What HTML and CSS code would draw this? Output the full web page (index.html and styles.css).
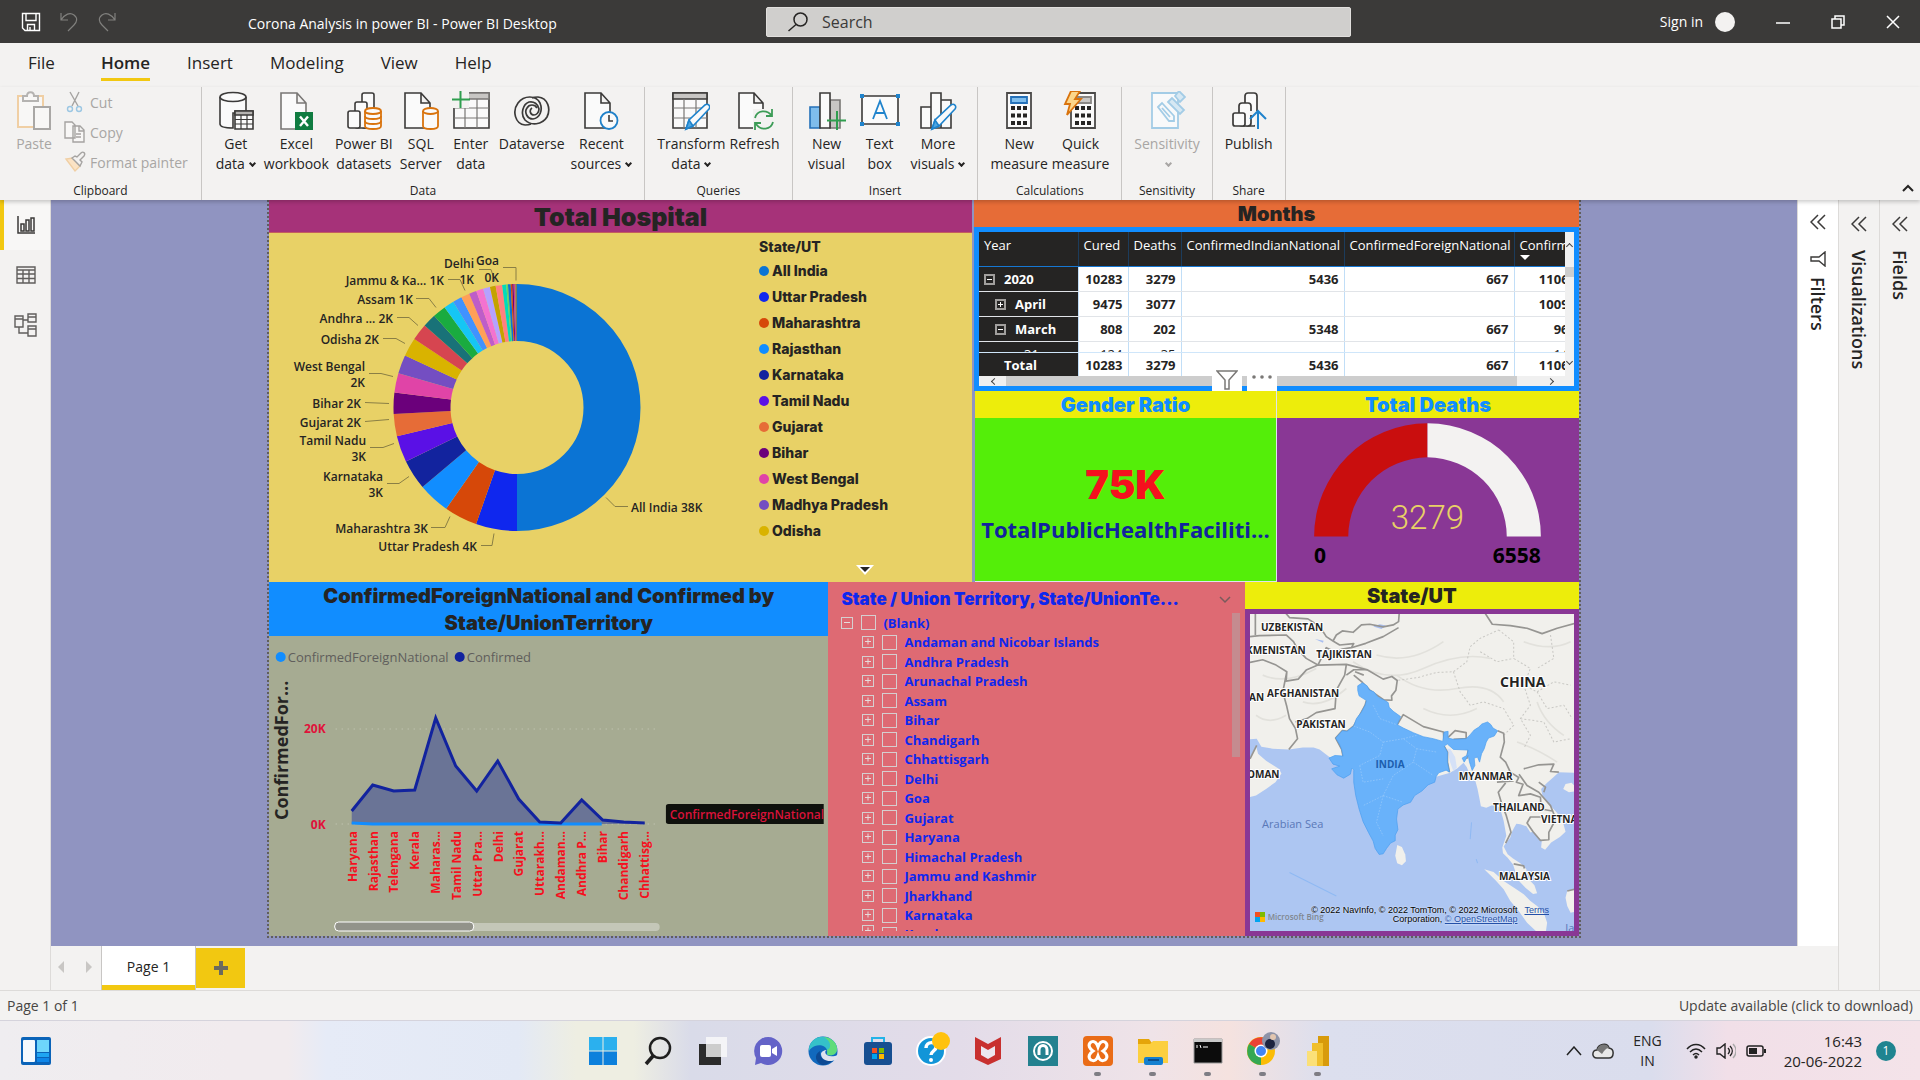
FILE: index.html
```html
<!DOCTYPE html>
<html lang="en">
<head>
<meta charset="utf-8">
<title>Corona Analysis in power BI - Power BI Desktop</title>
<link rel="stylesheet" href="styles.css">
</head>
<body>
<div class="app">

<header class="titlebar">
  <div class="titlebar-left">
    <button class="icon-btn" aria-label="Save"><svg width="20" height="20" viewBox="0 0 20 20" fill="none" stroke="#fff" stroke-width="1.4"><path d="M1.5 1.5h17v17H4l-2.500-2.500zM5 1.500v7h10v-7M6.500 18v-5.500h7V18M9 18v-3"/></svg></button>
    <button class="icon-btn" aria-label="Undo"><svg width="20" height="20" viewBox="0 0 20 20" fill="none" stroke="#81807e" stroke-width="1.200"><path d="M2 1v7h7M2 8C6 2 11 0 15 3s3 7 0 10l-6 6"/></svg></button>
    <button class="icon-btn" aria-label="Redo"><svg width="20" height="20" viewBox="0 0 20 20" fill="none" stroke="#81807e" stroke-width="1.200"><path d="M18 1v7h-7M18 8C14 2 9 0 5 3s-3 7 0 10l6 6"/></svg></button>
    <span class="doc-title">Corona Analysis in power BI - Power BI Desktop</span>
  </div>
  <label class="search">
    <svg width="22" height="20" viewBox="0 0 22 20" fill="none" stroke="#252423" stroke-width="1.500"><circle cx="13.500" cy="7.500" r="6.500"/><path d="M9 12.500L1.500 19"/></svg>
    <input type="text" placeholder="Search" aria-label="Search">
  </label>
  <div class="titlebar-right">
    <button class="sign-in">Sign in<span class="avatar"></span></button>
    <button class="icon-btn" aria-label="Minimize"><svg width="14" height="14" viewBox="0 0 14 14" stroke="#fff" stroke-width="1.500"><path d="M0 8h14"/></svg></button>
    <button class="icon-btn" aria-label="Restore"><svg width="14" height="14" viewBox="0 0 14 14" fill="none" stroke="#fff" stroke-width="1.500"><path d="M1 4h9v9H1zM4 4V1h9v9h-3"/></svg></button>
    <button class="icon-btn" aria-label="Close"><svg width="14" height="14" viewBox="0 0 14 14" stroke="#fff" stroke-width="1.500"><path d="M1 1l12 12M13 1L1 13"/></svg></button>
  </div>
</header>

<nav class="tabs">
  <button class="tab file">File</button>
  <button class="tab active">Home</button>
  <button class="tab">Insert</button>
  <button class="tab">Modeling</button>
  <button class="tab">View</button>
  <button class="tab">Help</button>
</nav>

<section class="ribbon">
  <div class="group group-clipboard">
    <div class="group-body">
      <button class="tool off">
        <svg width="38" height="40" viewBox="0 0 38 40" fill="#f8f7f6" stroke-width="2"><path d="M3 5h25v31H3z" stroke="#f0cfa4"/><path d="M6 8h19v25H6z" stroke="none"/><path d="M8 10V5h4c0-5 7-5 7 0h4v5z" stroke="#b5b3b1"/><path d="M19 16h16v22H19z" stroke="#a9a7a5"/></svg>
        <span>Paste</span></button>
      <div class="mini-tools">
        <button class="mini"><svg width="22" height="22" viewBox="0 0 22 22" fill="none" stroke="#a5a3a1" stroke-width="1.400"><path d="M6 1l8 14M15 1L8 15"/><circle cx="6" cy="18" r="2.500" stroke="#9cc7e3"/><circle cx="15" cy="18" r="2.500" stroke="#9cc7e3"/></svg>Cut</button>
        <button class="mini"><svg width="22" height="22" viewBox="0 0 22 22" fill="#f8f7f6" stroke="#a5a3a1" stroke-width="1.400"><path d="M1 1h7l3 3v13H1zM9 5h7l4 4v12H9zM15 5v5h5M12 13h5M12 16h5"/></svg>Copy</button>
        <button class="mini"><svg width="22" height="22" viewBox="0 0 22 22" fill="#f3f2f1" stroke="#a5a3a1" stroke-width="1.400"><path d="M2 8l9 12 5-5-7-8z" fill="#fbe3c5" stroke="#f0cfa4"/><path d="M8 7l8 8 2-4-2-2 4-4c2-3-1-5-3-3l-4 4-2-1z"/></svg>Format painter</button>
      </div>
    </div>
    <div class="group-name">Clipboard</div>
  </div>

  <div class="group group-data">
    <div class="group-body">
      <button class="tool"><svg width="38" height="40" viewBox="0 0 38 40" fill="#fafafa" stroke="#3b3a39" stroke-width="1.600"><path d="M3 6v27c0 3 5 4 13 4V22h13V6"/><ellipse cx="16" cy="6" rx="13" ry="4.500"/><path d="M18 20h18v18H18z"/><path d="M18 20h18v4H18z" fill="#b5b3b1"/><path d="M18 28.500h18M18 33h18M24 24v14M30 24v14" stroke-width="1.200"/></svg><span>Get<br>data<i class="caret"></i></span></button>
      <button class="tool"><svg width="38" height="40" viewBox="0 0 38 40" fill="#fafafa" stroke="#797775" stroke-width="1.600"><path d="M4 2h16l9 10v26H4zM20 2v10h9"/><path d="M18 21h18v18H18z" fill="#107c41" stroke="none"/><path d="M23 25.500l8 9.500M31 25.500L23 35" stroke="#fff" stroke-width="2.400"/></svg><span>Excel<br>workbook</span></button>
      <button class="tool"><svg width="38" height="40" viewBox="0 0 38 40" fill="#fafafa" stroke="#3b3a39" stroke-width="1.600"><rect x="17" y="2" width="12" height="35" rx="2"/><rect x="10" y="11" width="12" height="26" rx="2"/><rect x="3" y="20" width="12" height="17" rx="2"/><g stroke="#d9730d" stroke-width="1.800"><path d="M20 20v15c0 4 16 4 16 0V20"/><ellipse cx="28" cy="20" rx="8" ry="3"/><path d="M20 25c0 4 16 4 16 0M20 30c0 4 16 4 16 0" fill="none"/></g></svg><span>Power BI<br>datasets</span></button>
      <button class="tool"><svg width="38" height="40" viewBox="0 0 38 40" fill="#fafafa" stroke="#3b3a39" stroke-width="1.600"><path d="M3 2h16l9 10v25H3zM19 2v10h9"/><g stroke="#d9730d" stroke-width="1.800"><path d="M21 20v15c0 4 15 4 15 0V20"/><ellipse cx="28.500" cy="20" rx="7.500" ry="3"/></g></svg><span>SQL<br>Server</span></button>
      <button class="tool"><svg width="38" height="40" viewBox="0 0 38 40" fill="#fafafa" stroke="#3b3a39" stroke-width="1.600"><path d="M2 2h35v35H2z"/><path d="M13 2h24v6H13z" fill="#c8c6c4" stroke="#797775"/><path d="M2 17h35M2 27h35M13 8v29M25 8v29" stroke="#797775" stroke-width="1.200"/><path d="M0 0h17v17H0z" fill="#f3f2f1" stroke="none"/><path d="M8.500-1v18M0 8.500h18" stroke="#2f9e4f" stroke-width="2"/></svg><span>Enter<br>data</span></button>
      <button class="tool"><svg width="38" height="40" viewBox="0 0 38 40" fill="none" stroke="#3b3a39" stroke-width="1.700"><path d="M12 34C2 33-1 20 5 12 11 4 23 4 27 12c3 7 0 15-7 16-6 0-9-7-6-11 2-4 8-4 10 0"/><path d="M25 6c10 1 13 12 9 20-5 8-16 9-22 3-5-6-2-16 4-18 5-1 9 2 10 7 0 4-3 6-5 6-4 0-5-5-2-7"/><path d="M19 7c2-1 4-1 6-1M12 34c3 0 4 0 6-1"/></svg><span>Dataverse</span></button>
      <button class="tool"><svg width="38" height="40" viewBox="0 0 38 40" fill="#fafafa" stroke="#3b3a39" stroke-width="1.600"><path d="M3 2h16l9 10v25H3zM19 2v10h9"/><circle cx="27" cy="29.500" r="8.500" stroke="#2081c9" stroke-width="1.800"/><path d="M27 24v6h4" fill="none"/></svg><span>Recent<br>sources<i class="caret"></i></span></button>
    </div>
    <div class="group-name">Data</div>
  </div>

  <div class="group">
    <div class="group-body">
      <button class="tool"><svg width="38" height="40" viewBox="0 0 38 40" fill="#fafafa" stroke="#3b3a39" stroke-width="1.600"><path d="M1 2h34v35H1z"/><path d="M1 2h34v6H1z" fill="#c8c6c4"/><path d="M1 17h34M1 27h34M12 8v29M24 8v29" stroke="#797775" stroke-width="1.200"/><path d="M14 38l3-9 16-15c3-2 6 1 4 4L21 35z" stroke="#1f83cc"/><path d="M14 38l3-9 4 6z" fill="#4fa7e2" stroke="#1f83cc"/></svg><span>Transform<br>data<i class="caret"></i></span></button>
      <button class="tool"><svg width="38" height="40" viewBox="0 0 38 40" fill="#fafafa" stroke="#3b3a39" stroke-width="1.600"><path d="M3 2h15l9 10v25H3zM18 2v10h9"/><path d="M17 18h21v22H17z" fill="#f3f2f1" stroke="none"/><path d="M19 27c2-8 12-9 17-2M36 18v7h-6M37 31c-2 8-12 9-17 2M19 39v-7h6" fill="none" stroke="#3d9c57" stroke-width="1.800"/></svg><span>Refresh</span></button>
    </div>
    <div class="group-name">Queries</div>
  </div>

  <div class="group group-insert">
    <div class="group-body">
      <button class="tool"><svg width="38" height="40" viewBox="0 0 38 40" fill="#fafafa" stroke="#3b3a39" stroke-width="1.600"><path d="M2 16h10v21H2z" fill="#7fbdec" stroke="#2470b8"/><path d="M22 9h10v28H22z" fill="#c8c6c4" stroke="#797775"/><path d="M12 2h10v35H12z"/><path d="M29 20v19M19 29.500h19" stroke="#2f9e4f" stroke-width="2"/></svg><span>New<br>visual</span></button>
      <button class="tool"><svg width="42" height="40" viewBox="0 0 42 40" fill="#fafafa" stroke="#3b3a39" stroke-width="1.600"><path d="M3 5h36v28H3z"/><g fill="#1f83cc" stroke="none"><path d="M1 3h4v4H1zM37 3h4v4h-4zM1 31h4v4H1zM37 31h4v4h-4z"/></g><path d="M14 28l7-18 7 18M16.500 22h9" fill="none" stroke="#1f83cc" stroke-width="1.800"/></svg><span>Text<br>box</span></button>
      <button class="tool"><svg width="38" height="40" viewBox="0 0 38 40" fill="#fafafa" stroke="#3b3a39" stroke-width="1.600"><path d="M2 16h10v21H2zM22 9h10v28H22zM12 2h10v35H12z"/><path d="M13 38l3-9 16-15c3-2 6 1 4 4L20 35z" stroke="#1f83cc"/><path d="M13 38l3-9 4 6z" fill="#4fa7e2" stroke="#1f83cc"/></svg><span>More<br>visuals<i class="caret"></i></span></button>
    </div>
    <div class="group-name">Insert</div>
  </div>

  <div class="group">
    <div class="group-body">
      <button class="tool"><svg width="28" height="40" viewBox="0 0 28 40" fill="#fafafa" stroke="#4a4948" stroke-width="1.800"><path d="M2 2h24v35H2z"/><path d="M6 6h16v6H6z" fill="#7fbdec" stroke="#2470b8"/><path d="M6 17h17M6 24.500h17M6 32h17" stroke="#252423" stroke-width="4" stroke-dasharray="4 2"/></svg><span>New<br>measure</span></button>
      <button class="tool"><svg width="36" height="40" viewBox="0 0 36 40" fill="#fafafa" stroke="#4a4948" stroke-width="1.800"><path d="M8 2h24v35H8z"/><path d="M14 6h14v6H14z" fill="#c8c6c4" stroke="#8a8886"/><path d="M12 17h17M12 24.500h17M12 32h17" stroke="#252423" stroke-width="4" stroke-dasharray="4 2"/><path d="M8 0h9l-5 8h6L4 24l3-11H2z" fill="#fcd68a" stroke="#d9730d"/></svg><span>Quick<br>measure</span></button>
    </div>
    <div class="group-name">Calculations</div>
  </div>

  <div class="group">
    <div class="group-body">
      <button class="tool off"><svg width="38" height="40" viewBox="0 0 38 40" fill="#f8f9fa" stroke="#a3cce6" stroke-width="1.800"><path d="M4 2h26v35H4z"/><path d="M10 16l4-4 12 13v5h-5zM14 17l8 9" /><path d="M20 11l4-4 12 12-4 4zM27 5l4-5 6 6-5 5z" fill="#d6e8f3"/></svg><span>Sensitivity<br><i class="caret"></i></span></button>
    </div>
    <div class="group-name">Sensitivity</div>
  </div>

  <div class="group">
    <div class="group-body">
      <button class="tool"><svg width="38" height="40" viewBox="0 0 38 40" fill="#fafafa" stroke="#3b3a39" stroke-width="1.700"><rect x="15" y="2" width="12" height="33" rx="3"/><rect x="9" y="12" width="12" height="23" rx="3"/><rect x="3" y="22" width="12" height="13" rx="2"/><path d="M20 20h16v20H25V24h-5z" fill="#f3f2f1" stroke="none"/><path d="M28 38V20M20 28l8-8 8 8" fill="none" stroke="#1f83cc" stroke-width="2"/></svg><span>Publish</span></button>
    </div>
    <div class="group-name">Share</div>
  </div>
  <button class="icon-btn collapse" aria-label="Collapse ribbon"><svg width="12" height="8" viewBox="0 0 12 8" fill="none" stroke="#252423" stroke-width="2"><path d="M1 7l5-5 5 5"/></svg></button>
</section>

<main class="workspace">
  <nav class="rail">
    <button class="rail-btn on" aria-label="Report view"><svg width="18" height="18" viewBox="0 0 18 18" fill="none" stroke="#3b3a39" stroke-width="1.500"><path d="M1 0v17h17M4 8h3v7H4zM9 4h3v11H9zM14 2h3v13h-3z"/></svg></button>
    <button class="rail-btn" aria-label="Data view"><svg width="20" height="18" viewBox="0 0 20 18" fill="none" stroke="#605e5c" stroke-width="1.400"><path d="M1 1h18v16H1zM1 4h18M1 8h18M1 12.500h18M7 4v13M13 4v13"/></svg></button>
    <button class="rail-btn" aria-label="Model view"><svg width="24" height="24" viewBox="0 0 24 24" fill="none" stroke="#605e5c" stroke-width="1.400"><path d="M1 3h8v11H1zM1 6h8M14 1h8v8h-8zM14 4h8M14 13h8v10h-8zM14 16h8M9 7h5M5 14v6h9"/></svg></button>
  </nav>

  <div class="center">
    <div class="center-row">
      <div class="canvas">
        <div class="report">
          <div class="report-top">
            <section class="visual hospital">
              <h2>Total Hospital</h2>
              <div class="hospital-body">
                <svg class="donut" viewBox="0 0 480 348" role="img" aria-label="Hospitals by state">
                  <g class="ring" transform="rotate(-90 248 174)">
                    <circle cx="248" cy="174" r="95" pathLength="360" stroke="#0b74d4" stroke-dasharray="180 360"/>
                    <circle cx="248" cy="174" r="95" pathLength="360" stroke="#0f27ee" stroke-dasharray="19.400 360" stroke-dashoffset="-180"/>
                    <circle cx="248" cy="174" r="95" pathLength="360" stroke="#d64809" stroke-dasharray="15.600 360" stroke-dashoffset="-199.400"/>
                    <circle cx="248" cy="174" r="95" pathLength="360" stroke="#118dff" stroke-dasharray="14.900 360" stroke-dashoffset="-215"/>
                    <circle cx="248" cy="174" r="95" pathLength="360" stroke="#12239e" stroke-dasharray="14.100 360" stroke-dashoffset="-229.900"/>
                    <circle cx="248" cy="174" r="95" pathLength="360" stroke="#5a10e6" stroke-dasharray="12.500 360" stroke-dashoffset="-244"/>
                    <circle cx="248" cy="174" r="95" pathLength="360" stroke="#e66c37" stroke-dasharray="10.400 360" stroke-dashoffset="-256.500"/>
                    <circle cx="248" cy="174" r="95" pathLength="360" stroke="#6b007b" stroke-dasharray="10.100 360" stroke-dashoffset="-266.900"/>
                    <circle cx="248" cy="174" r="95" pathLength="360" stroke="#e044a7" stroke-dasharray="9.200 360" stroke-dashoffset="-277"/>
                    <circle cx="248" cy="174" r="95" pathLength="360" stroke="#744ec2" stroke-dasharray="8.800 360" stroke-dashoffset="-286.200"/>
                    <circle cx="248" cy="174" r="95" pathLength="360" stroke="#d9b300" stroke-dasharray="8.700 360" stroke-dashoffset="-295"/>
                    <circle cx="248" cy="174" r="95" pathLength="360" stroke="#d64550" stroke-dasharray="7.900 360" stroke-dashoffset="-303.700"/>
                    <circle cx="248" cy="174" r="95" pathLength="360" stroke="#197278" stroke-dasharray="6.300 360" stroke-dashoffset="-311.600"/>
                    <circle cx="248" cy="174" r="95" pathLength="360" stroke="#1aab40" stroke-dasharray="6.200 360" stroke-dashoffset="-317.900"/>
                    <circle cx="248" cy="174" r="95" pathLength="360" stroke="#15c6f4" stroke-dasharray="4.800 360" stroke-dashoffset="-324.100"/>
                    <circle cx="248" cy="174" r="95" pathLength="360" stroke="#4092ff" stroke-dasharray="4.300 360" stroke-dashoffset="-328.900"/>
                    <circle cx="248" cy="174" r="95" pathLength="360" stroke="#ffa058" stroke-dasharray="4 360" stroke-dashoffset="-333.200"/>
                    <circle cx="248" cy="174" r="95" pathLength="360" stroke="#be5dc9" stroke-dasharray="3.500 360" stroke-dashoffset="-337.200"/>
                    <circle cx="248" cy="174" r="95" pathLength="360" stroke="#f472d0" stroke-dasharray="3.300 360" stroke-dashoffset="-340.700"/>
                    <circle cx="248" cy="174" r="95" pathLength="360" stroke="#b5a1ff" stroke-dasharray="3.300 360" stroke-dashoffset="-344"/>
                    <circle cx="248" cy="174" r="95" pathLength="360" stroke="#c4a200" stroke-dasharray="2.700 360" stroke-dashoffset="-347.300"/>
                    <circle cx="248" cy="174" r="95" pathLength="360" stroke="#ff8080" stroke-dasharray="3 360" stroke-dashoffset="-350"/>
                    <circle cx="248" cy="174" r="95" pathLength="360" stroke="#00dbbc" stroke-dasharray="1.900 360" stroke-dashoffset="-353"/>
                    <circle cx="248" cy="174" r="95" pathLength="360" stroke="#5bd667" stroke-dasharray="0.800 360" stroke-dashoffset="-354.900"/>
                    <circle cx="248" cy="174" r="95" pathLength="360" stroke="#0b74d4" stroke-dasharray="1.300 360" stroke-dashoffset="-355.700"/>
                    <circle cx="248" cy="174" r="95" pathLength="360" stroke="#d64809" stroke-dasharray="0.700 360" stroke-dashoffset="-357"/>
                    <circle cx="248" cy="174" r="95" pathLength="360" stroke="#6b007b" stroke-dasharray="0.700 360" stroke-dashoffset="-357.700"/>
                    <circle cx="248" cy="174" r="95" pathLength="360" stroke="#c83d95" stroke-dasharray="0.800 360" stroke-dashoffset="-358.400"/>
                    <circle cx="248" cy="174" r="95" pathLength="360" stroke="#7d7a55" stroke-dasharray="0.800 360" stroke-dashoffset="-359.200"/>
                  </g>
                  <path class="leader" d="M234 34h13v13M210 36h12l4 12M179 46h12l5 11M147 65h13l7 9M128 84h12l9 8M114 105h13l9 5M100 140h12l12 3M96 169l24 1M96 188l24-2M101 214h13l11-4M118 250h12l10-7M162 294h14l5-11M212 312h11l2-12M337 264l9 9h13"/>
                  <g class="label">
                    <text x="205" y="34" text-anchor="end">Delhi</text><text x="205" y="50" text-anchor="end">1K</text>
                    <text x="230" y="31" text-anchor="end">Goa</text><text x="230" y="48" text-anchor="end">0K</text>
                    <text x="175" y="51" text-anchor="end">Jammu &amp; Ka... 1K</text>
                    <text x="144" y="70" text-anchor="end">Assam 1K</text>
                    <text x="124" y="89" text-anchor="end">Andhra ... 2K</text>
                    <text x="110" y="110" text-anchor="end">Odisha 2K</text>
                    <text x="96" y="137" text-anchor="end">West Bengal</text><text x="96" y="153" text-anchor="end">2K</text>
                    <text x="92" y="174" text-anchor="end">Bihar 2K</text>
                    <text x="92" y="193" text-anchor="end">Gujarat 2K</text>
                    <text x="97" y="211" text-anchor="end">Tamil Nadu</text><text x="97" y="227" text-anchor="end">3K</text>
                    <text x="114" y="247" text-anchor="end">Karnataka</text><text x="114" y="263" text-anchor="end">3K</text>
                    <text x="159" y="299" text-anchor="end">Maharashtra 3K</text>
                    <text x="208" y="317" text-anchor="end">Uttar Pradesh 4K</text>
                    <text x="362" y="278">All India 38K</text>
                  </g>
                </svg>
                <div class="legend">
                  <h3>State/UT</h3>
                  <ul>
                    <li class="c1">All India</li><li class="c2">Uttar Pradesh</li><li class="c3">Maharashtra</li><li class="c4">Rajasthan</li><li class="c5">Karnataka</li><li class="c6">Tamil Nadu</li><li class="c7">Gujarat</li><li class="c8">Bihar</li><li class="c9">West Bengal</li><li class="c10">Madhya Pradesh</li><li class="c11">Odisha</li>
                  </ul>
                  <button class="icon-btn more" aria-label="More"><svg width="20" height="12" viewBox="0 0 20 12"><path d="M1 1h18L10 11z" fill="#fff"/><path d="M5 3h10l-5 5z" fill="#252423"/></svg></button>
                </div>
              </div>
            </section>

            <div class="right-col">
              <section class="visual months">
                <h2>Months</h2>
                <div class="matrix">
                  <div class="matrix-main">
                    <div class="matrix-scroll">
                      <table>
                        <colgroup><col class="w-year"><col class="w-cured"><col class="w-deaths"><col class="w-indian"><col class="w-foreign"><col class="w-conf"></colgroup>
                        <thead><tr><th>Year</th><th>Cured</th><th>Deaths</th><th>ConfirmedIndianNational</th><th>ConfirmedForeignNational</th><th class="sorted">Confirmed</th></tr></thead>
                        <tbody>
                          <tr><th scope="row"><button class="exp minus" aria-label="Collapse"></button>2020</th><td>10283</td><td>3279</td><td>5436</td><td>667</td><td>11060</td></tr>
                          <tr><th scope="row" class="sub"><button class="exp plus" aria-label="Expand"></button>April</th><td>9475</td><td>3077</td><td></td><td></td><td>10097</td></tr>
                          <tr><th scope="row" class="sub"><button class="exp minus" aria-label="Collapse"></button>March</th><td>808</td><td>202</td><td>5348</td><td>667</td><td>963</td></tr>
                          <tr class="cut"><th scope="row"><div>31</div></th><td><div>124</div></td><td><div>35</div></td><td></td><td></td><td><div>146</div></td></tr>
                        </tbody>
                        <tfoot><tr><th scope="row" class="total">Total</th><td>10283</td><td>3279</td><td>5436</td><td>667</td><td>11060</td></tr></tfoot>
                      </table>
                    </div>
                    <div class="vscroll"><i class="chev up"></i><i class="thumb"></i><i class="chev down"></i></div>
                  </div>
                  <div class="hscroll"><i class="chev left"></i><i class="thumb"></i><i class="chev right"></i></div>
                  <div class="visual-tools">
                    <button aria-label="Filters"><svg width="22" height="20" viewBox="0 0 22 20" fill="none" stroke="#7a7876" stroke-width="1.500"><path d="M1 1h20l-8 9v9H9v-9z"/></svg></button>
                    <button aria-label="More options"><svg width="22" height="20" viewBox="0 0 22 20" fill="#7a7876"><circle cx="3" cy="7" r="1.800"/><circle cx="11" cy="7" r="1.800"/><circle cx="19" cy="7" r="1.800"/></svg></button>
                  </div>
                </div>
              </section>
              <div class="kpis">
                <section class="visual gender">
                  <h2>Gender Ratio</h2>
                  <div class="card"><strong>75K</strong><span>TotalPublicHealthFaciliti...</span></div>
                </section>
                <section class="visual deaths">
                  <h2>Total Deaths</h2>
                  <svg class="gauge" viewBox="0 0 301 163" role="img" aria-label="Total deaths gauge">
                    <path d="M37 118A113 113 0 0 1 150 5V39A79 79 0 0 0 71 118Z" fill="#c90e0e"/>
                    <path d="M150 5A113 113 0 0 1 263 118H229A79 79 0 0 0 150 39Z" fill="#f3f2f1"/>
                    <text class="gauge-value" x="150" y="110" text-anchor="middle">3279</text>
                    <text class="gauge-end" x="37" y="144">0</text>
                    <text class="gauge-end" x="263" y="144" text-anchor="end">6558</text>
                  </svg>
                </section>
              </div>
            </div>
          </div>

          <div class="report-bottom">
            <section class="visual trend">
              <h2>ConfirmedForeignNational and Confirmed by State/UnionTerritory</h2>
              <svg class="area" viewBox="0 0 558 300" role="img" aria-label="Confirmed cases by state">
                <circle cx="11" cy="21" r="5" fill="#118dff"/><text class="key" x="18" y="26">ConfirmedForeignNational</text>
                <circle cx="190" cy="21" r="5" fill="#12239e"/><text class="key" x="197" y="26">Confirmed</text>
                <text class="axis-title" transform="translate(18 184) rotate(-90)">ConfirmedFor...</text>
                <path class="grid-line" d="M66 93h322M66 188h322"/>
                <text class="tick" x="56" y="97" text-anchor="end">20K</text><text class="tick" x="56" y="193" text-anchor="end">0K</text>
                <path d="M82 175L103 149 124 155 145 154 166 82 186 130 207 155 228 125 249 163 270 186 291 187 312 164 333 184 354 186 375 187V188H82Z" fill="#12239e" fill-opacity=".4"/>
                <path d="M82 187l21 1h229" fill="none" stroke="#118dff" stroke-width="3"/>
                <path d="M82 175L103 149 124 155 145 154 166 82 186 130 207 155 228 125 249 163 270 186 291 187 312 164 333 184 354 186 375 187" fill="none" stroke="#12239e" stroke-width="3"/>
                <g class="cat" text-anchor="end">
                  <text transform="translate(87 195) rotate(-90)">Haryana</text>
                  <text transform="translate(108 195) rotate(-90)">Rajasthan</text>
                  <text transform="translate(128 195) rotate(-90)">Telengana</text>
                  <text transform="translate(149 195) rotate(-90)">Kerala</text>
                  <text transform="translate(170 195) rotate(-90)">Maharas...</text>
                  <text transform="translate(191 195) rotate(-90)">Tamil Nadu</text>
                  <text transform="translate(212 195) rotate(-90)">Uttar Pra...</text>
                  <text transform="translate(233 195) rotate(-90)">Delhi</text>
                  <text transform="translate(253 195) rotate(-90)">Gujarat</text>
                  <text transform="translate(274 195) rotate(-90)">Uttarakh...</text>
                  <text transform="translate(295 195) rotate(-90)">Andaman...</text>
                  <text transform="translate(316 195) rotate(-90)">Andhra P...</text>
                  <text transform="translate(337 195) rotate(-90)">Bihar</text>
                  <text transform="translate(358 195) rotate(-90)">Chandigarh</text>
                  <text transform="translate(379 195) rotate(-90)">Chhattisg...</text>
                </g>
                <svg x="396" y="168" width="158" height="20"><rect width="170" height="20" rx="3" fill="#0f110d"/><text class="series-label" x="4" y="15">ConfirmedForeignNational</text></svg>
                <rect x="65" y="287" width="325" height="8" rx="4" fill="#c4c7b8"/>
                <rect x="65" y="286" width="139" height="9" rx="4" fill="#92938a" stroke="#fff"/>
              </svg>
            </section>

            <section class="visual slicer">
              <header><h2>State / Union Territory, State/UnionTe...</h2><button class="icon-btn" aria-label="Expand slicer"><svg width="12" height="8" viewBox="0 0 12 8" fill="none" stroke="#7a5a5c" stroke-width="1.500"><path d="M1 1l5 5 5-5"/></svg></button></header>
              <div class="slicer-body">
                <ul>
                  <li class="root"><button class="box minus" aria-label="Collapse"></button><label><input type="checkbox">(Blank)</label></li>
                  <li><button class="box plus" aria-label="Expand"></button><label><input type="checkbox">Andaman and Nicobar Islands</label></li>
                  <li><button class="box plus" aria-label="Expand"></button><label><input type="checkbox">Andhra Pradesh</label></li>
                  <li><button class="box plus" aria-label="Expand"></button><label><input type="checkbox">Arunachal Pradesh</label></li>
                  <li><button class="box plus" aria-label="Expand"></button><label><input type="checkbox">Assam</label></li>
                  <li><button class="box plus" aria-label="Expand"></button><label><input type="checkbox">Bihar</label></li>
                  <li><button class="box plus" aria-label="Expand"></button><label><input type="checkbox">Chandigarh</label></li>
                  <li><button class="box plus" aria-label="Expand"></button><label><input type="checkbox">Chhattisgarh</label></li>
                  <li><button class="box plus" aria-label="Expand"></button><label><input type="checkbox">Delhi</label></li>
                  <li><button class="box plus" aria-label="Expand"></button><label><input type="checkbox">Goa</label></li>
                  <li><button class="box plus" aria-label="Expand"></button><label><input type="checkbox">Gujarat</label></li>
                  <li><button class="box plus" aria-label="Expand"></button><label><input type="checkbox">Haryana</label></li>
                  <li><button class="box plus" aria-label="Expand"></button><label><input type="checkbox">Himachal Pradesh</label></li>
                  <li><button class="box plus" aria-label="Expand"></button><label><input type="checkbox">Jammu and Kashmir</label></li>
                  <li><button class="box plus" aria-label="Expand"></button><label><input type="checkbox">Jharkhand</label></li>
                  <li><button class="box plus" aria-label="Expand"></button><label><input type="checkbox">Karnataka</label></li>
                  <li class="last"><button class="box plus" aria-label="Expand"></button><label><input type="checkbox">Kerala</label></li>
                </ul>
                <i class="slicer-thumb"></i>
              </div>
            </section>

            <section class="visual map">
              <h2>State/UT</h2>
              <div class="map-frame">
                <svg viewBox="0 0 323 318" preserveAspectRatio="xMidYMid slice" role="img" aria-label="Map of India">
                  <rect width="323" height="318" fill="#adc6f2"/>
                  <g transform="scale(.33333) translate(-42 -114)" stroke-linejoin="round">
                    <g fill="#f1f0ec">
                      <path d="M42 114H1011V592L965 590 948 606 930 622 912 640 916 660 940 690 960 712 978 742 985 768 968 784 942 800 924 822 912 815 914 795 900 780 888 768 880 770 868 752 850 746 838 744 830 758 824 770 820 785 808 800 800 812 812 835 828 848 850 862 868 880 870 905 892 928 900 952 888 954 866 936 846 915 836 890 828 866 812 846 798 832 796 815 808 780 800 735 790 700 776 684 762 690 748 696 732 692 728 670 722 640 716 618 700 600 690 575 680 562 662 578 640 592 598 604 484 700 428 836 352 584 300 560 250 522 232 516 200 516 158 522 110 520 76 514 62 490 42 492Z"/>
                      <path d="M42 548L60 510 66 535 90 556 128 580 136 594 118 620 90 640 60 660 42 664Z"/>
                      <path d="M482 808L496 814 506 836 508 856 496 868 482 862 476 840Z"/>
                      <path d="M742 880L770 888 800 915 830 935 860 955 880 975 900 990 920 1010 930 1040 926 1068H900L870 1040 845 1005 820 975 800 940 775 912Z"/>
                      <path d="M1011 940L990 945 985 965 990 990 1000 1010 1011 1008ZM978 640L985 625 1003 622 1011 630V648L995 650Z"/>
                    </g>
                    <g fill="none" stroke="#e2e1dc" stroke-width="5"><path d="M350 260Q450 330 560 280T760 250M480 300Q560 360 660 340T800 380M420 240Q520 270 620 200M560 400Q640 440 720 400M80 300Q150 330 240 280M60 420Q100 450 150 420M860 200Q940 230 1000 200M900 380Q920 440 980 480M840 500Q900 520 960 560M200 380Q260 400 330 340"/></g>
                    <g fill="none" stroke="#c9c8c4" stroke-width="3" stroke-dasharray="6 6"><path d="M485 315L540 308 600 292 650 290 690 260 700 215 730 190 785 165M650 290L670 350 700 390 740 380 800 400 830 450 800 480M785 165L830 200 830 250 880 280 860 330 900 350 950 320 1000 330M860 330L880 390 850 430 880 480 860 520M900 350L930 400 980 390 1005 430M850 430L920 440 950 500 1000 490M730 230L780 260 830 250M940 180L950 250 900 280"/></g>
                    <path d="M630 520L640 560 650 588 660 575 655 545 640 520Z" fill="#d5e1f7"/>
                    <path d="M410 155L430 148 448 152 435 162ZM236 192L262 197 260 203Z" fill="#a9bff0"/>
                    <g fill="none" stroke="#969592" stroke-width="5">
                      <path d="M148 114L160 128 215 132 250 154 270 185 290 198 300 180 318 168 350 172 375 150 400 148 440 156 470 150 486 140 488 114M290 198L310 210 352 206 345 218 318 222 296 230 270 218 262 236 245 270M345 218L388 205 440 185 486 158M744 114L766 148 820 152 870 160 915 176 960 160 1011 146M42 185L70 182 150 180 172 200 185 224 210 250 245 270M42 262L80 254 120 270 152 290 150 318 186 312 210 285 245 270 330 268 362 276 392 284M152 290L140 350 152 394 160 430 178 460 184 490 158 522M330 268L325 300 300 345 296 400 240 412 212 430 178 440"/>
                      <path d="M330 300L352 284 392 284 440 312 466 304 482 316 478 345 465 362 466 375 442 374 400 345 378 322 352 300M356 290L382 300M390 376L386 390 374 412 352 452 332 468 318 466 298 488 316 522 320 542M482 448L500 418 560 454 620 470 622 498M634 486L655 466 688 472 688 490 650 492M782 466L800 474 802 500 790 545 806 560 820 590 845 606 838 620 858 626 845 660 880 655 910 665 912 700 945 706M806 622L784 650 796 690 808 720 822 770 806 802M846 596L870 630 905 650 940 690 956 730 935 770 935 792 910 794 888 768 870 742 880 724 912 724M860 580L905 568 950 566 940 588 965 590M830 864L860 870 862 878M905 620L925 635 920 650M58 114V180M42 550L62 510M1011 940L990 945"/>
                      <path d="M622 512L632 530 632 560 638 590M694 524L690 550M780 620L830 616"/>
                    </g>
                    <path fill="#69b2fa" stroke="#4a9df0" stroke-width="2" d="M378 323L392 332 398 344 412 350 425 366 442 374 455 382 458 396 470 408 492 424 482 448 500 458 530 472 560 484 590 490 618 498 622 470 634 468 634 488 650 492 688 490 700 478 712 464 725 456 735 446 752 440 762 448 768 458 782 466 772 482 755 488 748 500 742 520 734 535 728 560 722 545 712 548 714 570 706 585 698 560 694 540 682 560 676 548 690 540 694 524 650 522 632 506 622 512 632 530 632 560 638 590 628 584 606 592 598 604 594 620 574 628 556 646 534 660 522 680 500 688 484 700 480 730 484 762 476 778 476 795 462 802 450 818 440 834 428 836 416 818 410 796 396 770 380 738 368 700 358 660 352 620 352 584 346 578 342 596 322 608 302 598 286 580 310 572 290 566 278 548 296 540 320 542 316 522 310 508 298 488 318 466 332 468 352 452 360 430 374 412 386 390 390 376 368 362 364 346 364 332Z"/>
                    <path d="M352 452L400 470 440 500 430 540 370 570M440 500L500 490 540 520 530 560 470 600 440 660 380 690M540 520L600 530M530 560L590 600M440 660L500 680M410 390L430 430 480 448M440 660L420 740 440 780M500 490L540 480M370 570L380 620 440 610" fill="none" stroke="#9bcbfb" stroke-width="2" stroke-dasharray="5 4"/>
                    <path d="M704 740L700 790M718 850L722 862M160 890L300 960" stroke="#8fb9f3" stroke-width="3"/>
                  </g>
                  <g class="place">
                    <text x="11" y="18">UZBEKISTAN</text><text x="-4" y="41">KMENISTAN</text><text x="66" y="45">TAJIKISTAN</text>
                    <text x="-1" y="88">AN</text><text x="17" y="84">AFGHANISTAN</text><text x="46" y="115">PAKISTAN</text>
                    <text x="-3" y="164">OMAN</text><text x="208" y="166">MYANMAR</text><text x="242" y="197">THAILAND</text>
                    <text x="290" y="209">VIETNAM</text><text x="248" y="266">MALAYSIA</text>
                    <text class="big" x="249" y="74">CHINA</text><text class="india" x="125" y="155">INDIA</text>
                    <text class="sea" x="12" y="214">Arabian Sea</text><text class="sea" x="314" y="318">Ja</text>
                  </g>
                </svg>
                <div class="bing"><svg width="10" height="10" viewBox="0 0 10 10"><path d="M0 0h5v5H0z" fill="#f25022"/><path d="M5 0h5v5H5z" fill="#80bb01"/><path d="M0 5h5v5H0z" fill="#00a4ef"/><path d="M5 5h5v5H5z" fill="#ffb900"/></svg>Microsoft Bing</div>
                <div class="credit"><p>© 2022 NavInfo, © 2022 TomTom, © 2022 Microsoft Corporation, <a href="#osm">© OpenStreetMap</a></p><a href="#terms">Terms</a></div>
              </div>
            </section>
          </div>
        </div>
      </div>
      <aside class="pane filters">
        <button class="icon-btn" aria-label="Expand filters"><svg width="16" height="16" viewBox="0 0 16 16" fill="none" stroke="#3b3a39" stroke-width="1.500"><path d="M8 1L1 8l7 7M15 1L8 8l7 7"/></svg></button>
        <svg width="16" height="16" viewBox="0 0 16 16" fill="none" stroke="#3b3a39" stroke-width="1.400"><path d="M15 1v14L9 10H1V6h8z"/></svg>
        <span>Filters</span>
      </aside>
    </div>
    <div class="pages">
      <button class="nav-arrow prev" aria-label="Previous page"></button>
      <button class="nav-arrow next" aria-label="Next page"></button>
      <button class="page-tab">Page 1</button>
      <button class="add-page" aria-label="New page"><svg width="14" height="14" viewBox="0 0 14 14" stroke="#6b6a5e" stroke-width="4"><path d="M7 0v14M0 7h14"/></svg></button>
    </div>
  </div>
  <aside class="pane">
    <button class="icon-btn" aria-label="Expand visualizations"><svg width="16" height="16" viewBox="0 0 16 16" fill="none" stroke="#3b3a39" stroke-width="1.500"><path d="M8 1L1 8l7 7M15 1L8 8l7 7"/></svg></button>
    <span>Visualizations</span>
  </aside>
  <aside class="pane">
    <button class="icon-btn" aria-label="Expand fields"><svg width="16" height="16" viewBox="0 0 16 16" fill="none" stroke="#3b3a39" stroke-width="1.500"><path d="M8 1L1 8l7 7M15 1L8 8l7 7"/></svg></button>
    <span>Fields</span>
  </aside>
</main>

<footer class="status"><span>Page 1 of 1</span><a href="#update">Update available (click to download)</a></footer>

<div class="taskbar">
  <div class="task-left"><button class="task" aria-label="Widgets"><svg width="30" height="28" viewBox="0 0 30 28"><rect width="30" height="28" rx="2" fill="#0a63b8"/><rect x="2" y="3" width="12" height="22" rx="1" fill="#f4f9fd"/><path d="M16 3h12v12H16z" fill="#6ed6fb"/><path d="M16 16h12v4H16z" fill="#1ea5f2"/><path d="M16 21h12v4H16z" fill="#0e86e8"/></svg></button></div>
  <div class="task-center">
    <button class="task" aria-label="Start"><svg width="30" height="30" viewBox="0 0 30 30"><path d="M1 1h13.500v13.500H1zM15.500 1H29v13.500H15.500z" fill="#2bb0ee"/><path d="M1 15.500h13.500V29H1zM15.500 15.500H29V29H15.500z" fill="#0c80dc"/></svg></button>
    <button class="task" aria-label="Search"><svg width="30" height="30" viewBox="0 0 30 30" fill="none" stroke="#1f1f1f"><circle cx="17" cy="12" r="10" stroke-width="2.500"/><path d="M10 20l-7 8" stroke-width="3.500"/></svg></button>
    <button class="task" aria-label="Task view"><svg width="30" height="30" viewBox="0 0 30 30"><path d="M1 8h22v21H1z" fill="#2b2b2b"/><path d="M8 1h21v20H8z" fill="#fbfbfb" fill-opacity=".78"/></svg></button>
    <button class="task" aria-label="Chat"><svg width="30" height="30" viewBox="0 0 30 30"><path d="M15 1a14 14 0 1 1-7 26l-6 2 1-7A14 14 0 0 1 15 1z" fill="#6463c8"/><rect x="7" y="9" width="11" height="12" rx="2" fill="#fff"/><path d="M19 13l5-3v10l-5-3z" fill="#fff"/></svg></button>
    <button class="task" aria-label="Edge"><svg width="30" height="30" viewBox="0 0 30 30"><circle cx="15" cy="15" r="14.500" fill="#1169bd"/><path d="M1 12C3 4 9 0 16 1c9 1 13 7 13 12 0 6-6 7-9 6-2-1 0-2-1-5-1-4-7-6-12-4-3 1-5 3-6 5z" fill="#35c1c9"/><path d="M16 1c9 1 13 7 13 12 0 6-6 7-9 6-2-1 0-2-1-5 5-2 4-9-3-13z" fill="#5fdc7a"/><path d="M12 15c-1 6 4 12 14 8-3 4-8 6-12 6-6-2-9-10-2-14z" fill="#0d4a94"/><path d="M19 14c-3 0-3 8 8 6l3-1-1 4c-6 4-16 2-16-5 0-2 3-4 6-4z" fill="#dfe3ee"/></svg></button>
    <button class="task" aria-label="Store"><svg width="30" height="30" viewBox="0 0 30 30"><path d="M9 7V2h12v5" fill="none" stroke="#23b3e8" stroke-width="2"/><rect x="1" y="6" width="28" height="23" rx="3" fill="#174f91"/><path d="M9 12h5v5H9z" fill="#f25022"/><path d="M16 12h5v5h-5z" fill="#7fba00"/><path d="M9 18h5v5H9z" fill="#00a4ef"/><path d="M16 18h5v5h-5z" fill="#ffb900"/></svg></button>
    <button class="task" aria-label="Help"><svg width="34" height="38" viewBox="0 0 34 38"><circle cx="15" cy="19" r="14" fill="#1295d8" stroke="#fff" stroke-width="2"/><path d="M10 16c0-7 11-7 10-1 0 4-5 4-5 8" fill="none" stroke="#fff" stroke-width="3.500"/><circle cx="15" cy="28" r="2" fill="#fff"/><circle cx="25" cy="9" r="9" fill="#ffc20e"/></svg></button>
    <button class="task" aria-label="McAfee"><svg width="30" height="30" viewBox="0 0 30 30"><path d="M2 1l13 7 13-7v22l-13 6-13-6z" fill="#c8302f"/><path d="M8 10l7 4 7-4v9l-7 4-7-4z" fill="#ece6ee"/></svg></button>
    <button class="task" aria-label="Headset"><svg width="30" height="30" viewBox="0 0 30 30" fill="none"><path d="M0 0h30v30H0z" fill="#23818f"/><circle cx="15" cy="15" r="9" stroke="#fff" stroke-width="2"/><path d="M11 19v-5c0-6 8-6 8 0v5" stroke="#fff" stroke-width="3"/></svg></button>
    <button class="task run" aria-label="XAMPP"><svg width="30" height="30" viewBox="0 0 30 30"><rect width="30" height="30" rx="4" fill="#ea6c17"/><path d="M8 6c4-2 6 2 7 5 1-3 3-7 7-5 4 3 1 7-2 9 3 2 6 6 2 9-4 2-6-1-7-4-1 3-3 6-7 4-4-3-1-7 2-9-3-2-6-6-2-9z" fill="none" stroke="#fff" stroke-width="3"/></svg></button>
    <button class="task run" aria-label="Files"><svg width="30" height="30" viewBox="0 0 30 30"><path d="M0 3h11l3 4h12v6H0z" fill="#e5a50a"/><path d="M0 8h12l3-3h15v22H0z" fill="#fccf3f"/><rect x="6" y="21" width="19" height="8" rx="2" fill="#1580d0"/><path d="M10 24h11" stroke="#0b4f8d" stroke-width="2"/></svg></button>
    <button class="task run" aria-label="Command prompt"><svg width="30" height="26" viewBox="0 0 30 26"><path d="M1 1h28v24H1z" fill="#0c0c0c" stroke="#9a9a9a"/><path d="M1 1h28v3H1z" fill="#c9c9c9"/><path d="M4 7v3M7 7l1 3M10 9h5" stroke="#fff"/></svg></button>
    <button class="task run" aria-label="Chrome"><svg width="34" height="40" viewBox="0 0 34 40"><circle cx="15" cy="20" r="14" fill="#fbbc05"/><path d="M15 20L3 13A14 14 0 0 1 27 13z" fill="#ea4335"/><path d="M15 20L3 13a14 14 0 0 0 12 21z" fill="#34a853"/><circle cx="15" cy="20" r="6.500" fill="#fff"/><circle cx="15" cy="20" r="5" fill="#4285f4"/><circle cx="25" cy="10" r="9" fill="#8d93a8"/><circle cx="24" cy="13" r="5" fill="#1d2440"/><circle cx="27" cy="6" r="3" fill="#e2c6b0"/></svg></button>
    <button class="task run" aria-label="Power BI"><svg width="24" height="30" viewBox="0 0 24 30"><path d="M12 0h11v30H12z" fill="#d89b0c"/><path d="M6 7h11v23H6z" fill="#f0bf2b"/><path d="M1 15h10v15H1z" fill="#fbe078"/></svg></button>
  </div>
  <div class="tray">
    <svg width="16" height="10" viewBox="0 0 16 10" fill="none" stroke="#222" stroke-width="1.500"><path d="M1 9l7-8 7 8"/></svg>
    <svg width="22" height="16" viewBox="0 0 22 16"><path d="M5 15c-6 0-5-8 0-8C6 1 15-1 17 5c6 1 5 10 0 10z" fill="#e8e8e8" stroke="#333" stroke-width="1.500"/><path d="M5 7C6 1 15-1 17 5c-3 0-5 3-7 6z" fill="#777"/></svg>
    <span class="lang">ENG<br>IN</span>
    <svg width="20" height="16" viewBox="0 0 20 16" fill="none" stroke="#222" stroke-width="1.500"><path d="M1 6c5-6 13-6 18 0M4 9c4-4 8-4 12 0M7 12c2-2 4-2 6 0"/><circle cx="10" cy="14" r="1" fill="#222"/></svg>
    <svg width="20" height="16" viewBox="0 0 20 16" fill="none" stroke="#222" stroke-width="1.400"><path d="M1 5h3l5-4v14l-5-4H1zM12 5c2 2 2 4 0 6M14 3c3 3 3 7 0 10"/><path d="M17 1c4 4 4 10 0 14" stroke="#aaa"/></svg>
    <svg width="20" height="12" viewBox="0 0 20 12"><rect x="1" y="1" width="16" height="10" rx="2" fill="none" stroke="#222" stroke-width="1.500"/><path d="M3 3h8v6H3zM18 4h2v4h-2z" fill="#222"/></svg>
    <span class="clock">16:43<br>20-06-2022</span>
    <span class="badge">1</span>
  </div>
</div>
</div>
</body>
</html>
```

FILE: styles.css
```css
* { box-sizing: border-box; }
html, body { margin: 0; height: 100%; }
body { font-family: "Open Sans", "Noto Sans", sans-serif; font-size: 14px; color: #252423; }
h2, h3, ul, p { margin: 0; padding: 0; }
ul { list-style: none; }
button { font: inherit; color: inherit; background: none; border: 0; padding: 0; }
svg { display: block; flex-shrink: 0; }
.icon-btn { display: grid; place-items: center; }

.app { display: flex; flex-direction: column; height: 100vh; min-height: 720px; overflow: hidden; background: #f3f2f1; }

/* Title bar */
.titlebar { display: grid; grid-template-columns: 766fr 585fr 569fr; align-items: center; height: 43px; flex-shrink: 0; background: #3b3a39; color: #fff; }
.titlebar-left { display: flex; align-items: center; gap: 18px; padding-left: 21px; }
.doc-title { margin-left: 113px; white-space: nowrap; margin-top: 4px; }
.search { display: flex; align-items: center; gap: 13px; height: 30px; padding-left: 20px; background: #d0cfcd; border: 1px solid #e1dfdd; border-radius: 2px; }
.search input { flex: 1; border: 0; background: none; font: 16px "Open Sans", sans-serif; color: #252423; outline: 0; padding: 0; }
.search input::placeholder { color: #3b3a39; opacity: 1; }
.titlebar-right { display: flex; align-items: center; justify-content: flex-end; gap: 41px; padding-right: 20px; }
.sign-in { display: flex; align-items: center; gap: 12px; }
.avatar { width: 20px; height: 20px; border-radius: 50%; background: #f3f2f1; }

/* Ribbon */
.tabs { display: flex; gap: 37px; height: 44px; padding-left: 28px; flex-shrink: 0; font-size: 17px; }
.tab { height: 38px; padding-top: 3px; border-bottom: 3px solid transparent; }
.tab.file { margin-right: 9px; }
.tab.active { font-weight: 600; border-color: #f2c811; }
.ribbon { display: flex; height: 113px; flex-shrink: 0; position: relative; z-index: 1; background: #f3f2f1; box-shadow: 0 2px 4px rgba(0, 0, 0, .2); }
.group { display: flex; flex-direction: column; justify-content: space-between; padding: 4px 10px 1px; border-right: 1px solid #c8c6c4; }
.group-clipboard { padding-left: 13px; padding-right: 13px; }
.group-body { display: flex; }
.group-data .group-body { gap: 2px; }
.group-insert .group-body { gap: 5px; }
.group-name { text-align: center; font-size: 12px; line-height: 16px; }
.tool { display: flex; flex-direction: column; align-items: center; gap: 3px; min-width: 48px; padding: 0 2px; line-height: 20px; white-space: nowrap; align-self: flex-start; }
.group-clipboard .tool { min-width: 42px; }
.caret { display: inline-block; width: 5px; height: 5px; margin: 0 1px 3px 5px; border: solid currentColor; border-width: 0 2px 2px 0; transform: rotate(45deg); }
.off, .mini { color: #a8a6a4; }
.mini-tools { display: flex; flex-direction: column; gap: 8px; margin-left: 9px; }
.mini { display: flex; align-items: center; gap: 4px; height: 22px; white-space: nowrap; }
.collapse { margin-left: auto; align-self: flex-end; padding: 0 6px 8px 0; }

/* Workspace */
.workspace { display: flex; flex: 1; min-height: 0; border-bottom: 1px solid #dddbd9; }
.rail { width: 51px; flex-shrink: 0; border-right: 1px solid #dddbd9; }
.rail-btn { display: grid; place-items: center; width: 100%; height: 50px; border-left: 4px solid transparent; padding-right: 2px; }
.rail-btn.on { border-left-color: #f2c811; background: #f8f7f6; }
.center { display: flex; flex-direction: column; flex: 1; min-width: 0; }
.center-row { display: flex; flex: 1; min-height: 0; }
.canvas { flex: 1; min-width: 0; background: #9094c1; padding: 0 216px 8px; }
.report { display: flex; flex-direction: column; height: 100%; border: 2px dotted #605e5c; border-width: 0 2px 2px; }
.report-top { display: grid; grid-template-columns: 703fr 605fr; gap: 2px; flex: 382; min-height: 0; }
.report-bottom { display: grid; grid-template-columns: 559fr 416fr 334fr; flex: 354; min-height: 0; }
.visual { display: flex; flex-direction: column; min-width: 0; min-height: 0; overflow: hidden; }
.visual h2 { flex-shrink: 0; height: 27px; padding-top: 1px; font: 900 20px/27px "Inter", sans-serif; text-align: center; white-space: nowrap; }

.hospital { background: #e8d166; }
.visual.hospital h2 { font-size: 25px; line-height: 32px; height: 33px; background: #a63279; border-bottom: 1px solid #c45d5f; }
.hospital-body { display: grid; grid-template-columns: 480fr 223fr; flex: 1; min-height: 0; }
.donut { width: 100%; height: 100%; min-height: 0; }
.ring circle { fill: none; stroke-width: 57px; }
.leader { fill: none; stroke: #8a7f45; }
.label text { font-size: 12px; font-weight: 600; fill: #252423; }
.legend { display: flex; flex-direction: column; padding: 3px 0 6px 10px; font: 800 14px/26px "Inter", sans-serif; min-height: 0; }
.legend h3 { font: inherit; line-height: 22px; }
.legend li { display: flex; align-items: center; gap: 3px; white-space: nowrap; }
.legend li::before { content: ""; width: 10px; height: 10px; border-radius: 50%; background: var(--dot); }
.c1 { --dot: #0b74d4; } .c2 { --dot: #0f27ee; } .c3 { --dot: #d64809; } .c4 { --dot: #118dff; }
.c5 { --dot: #12239e; } .c6 { --dot: #5a10e6; } .c7 { --dot: #e66c37; } .c8 { --dot: #6b007b; }
.c9 { --dot: #e044a7; } .c10 { --dot: #744ec2; } .c11 { --dot: #d9b300; }
.more { margin: auto 0 0 96px; align-self: flex-start; }

.right-col { display: flex; flex-direction: column; min-width: 0; min-height: 0; }
.months { flex: 191; }
.months h2 { background: #e66c37; }
.matrix { position: relative; display: flex; flex-direction: column; flex: 1; min-height: 0; border: 5px solid #118dff; background: #fff; }
.matrix-main { display: flex; flex: 1; min-height: 0; }
.matrix-scroll { flex: 1; min-width: 0; overflow: hidden; }
.matrix table { table-layout: fixed; width: 630px; border-collapse: collapse; font-size: 13px; line-height: 18px; }
.w-year { width: 99px; } .w-cured { width: 50px; } .w-deaths { width: 53px; } .w-indian { width: 163px; } .w-foreign { width: 170px; }
.matrix th, .matrix td { height: 25px; padding: 0 5px; border-right: 1px solid #c1def7; border-bottom: 1px solid #e1e4e8; white-space: nowrap; }
.matrix td { text-align: right; font-weight: 700; }
.matrix th { background: #252423; color: #fff; text-align: left; }
.matrix thead th { height: 34px; padding: 4px 5px 0; vertical-align: top; font-weight: 400; border-right-color: #1c3c5c; border-bottom: 1px solid #1677d2; }
.matrix .sorted { position: relative; }
.sorted::after { content: ""; position: absolute; left: 5px; bottom: 6px; border: 5px solid transparent; border-top-color: #fff; border-bottom: 0; }
.matrix td:last-child { padding-right: 32px; }
.matrix tbody th { font-weight: 700; }
.matrix th.sub { padding-left: 16px; }
.matrix th.total { padding-left: 25px; border-bottom: 0; }
.matrix tr.cut th, .matrix tr.cut td { height: 11px; border-bottom-color: #cfe6fa; vertical-align: top; }
.cut div { height: 10px; padding-top: 3px; overflow: hidden; font-weight: 400; }
.cut th div { padding-left: 40px; }
.exp { position: relative; width: 11px; height: 11px; margin-right: 9px; border: 2px solid #a19f9d; vertical-align: 1px; }
.exp::before, .exp.plus::after, .box::before, .box.plus::after { content: ""; position: absolute; inset: 3px 1px auto; height: 1px; background: currentColor; }
.exp.plus::after, .box.plus::after { transform: rotate(90deg); }
.vscroll { display: flex; flex-direction: column; width: 9px; background: #f0f0f0; }
.vscroll .thumb { height: 10px; background: #cdcdcd; margin-top: 18px; }
.hscroll { display: flex; align-items: center; height: 10px; background: #f0f0f0; padding: 0 13px; }
.hscroll .thumb { flex: 1; height: 10px; background: #cdcdcd; margin: 0 31px 0 9px; }
.chev { width: 5px; height: 5px; border: solid #444; border-width: 1px 0 0 1px; flex-shrink: 0; }
.up { margin: 12px 2px 0; transform: rotate(45deg); }
.down { margin: auto 2px 12px; transform: rotate(225deg); }
.left { transform: rotate(-45deg); }
.right { transform: rotate(135deg); margin-right: 8px; }
.visual-tools { position: absolute; bottom: -5px; left: 233px; display: flex; gap: 5px; }
.visual-tools button { width: 30px; height: 22px; background: #fff; display: grid; place-items: center; }

.kpis { display: grid; grid-template-columns: 303fr 302fr; flex: 191; min-height: 0; }
.gender { margin-left: 1px; border: 1px solid #dfe3ee; border-width: 0 1px 1px 0; background: #54ee09; color: #118dff; }
.gender h2, .deaths h2, .map h2 { background: #eded0b; }
.card { display: flex; flex-direction: column; align-items: center; justify-content: center; flex: 1; padding-top: 14px; }
.card strong { font: 900 40px/44px "Inter", sans-serif; color: #f5101e; }
.card span { font-size: 22px; line-height: 44px; font-weight: 700; color: #12239e; }
.deaths { background: #893795; color: #118dff; }
.gauge { flex: 1; min-height: 0; width: 100%; }
.gauge-value { font: 300 33px "Roboto", sans-serif; fill: #e8d166; }
.gauge-end { font-size: 21px; font-weight: 700; fill: #000; }

.trend { background: #a6ab92; }
.visual.trend h2 { height: 54px; padding: 1px 36px 0; font-size: 20px; white-space: normal; background: #118dff; color: #252423; }
.area { flex: 1; min-height: 0; width: 100%; }
.key { font-size: 13px; fill: #605e5c; }
.axis-title { font-size: 18px; font-weight: 700; fill: #252423; }
.grid-line { stroke: #c9ccba; stroke-dasharray: 1 5; }
.tick { font-size: 12px; font-weight: 700; fill: #e0123a; }
.cat text { font-size: 12px; font-weight: 700; fill: #f5101e; }
.series-label { font-size: 12px; font-weight: 600; fill: #d9123a; }

.slicer { background: #de6a73; color: #0f27ee; padding: 4px 5px 5px 13px; }
.slicer header { display: flex; align-items: center; justify-content: space-between; height: 27px; padding-right: 9px; }
.visual.slicer h2 { font-size: 17px; padding-top: 0; }
.slicer-body { display: flex; flex: 1; min-height: 0; }
.slicer ul { flex: 1; display: grid; grid-template-rows: repeat(16, 1fr) 6px; overflow: hidden; font-size: 13px; font-weight: 700; line-height: 18px; min-height: 0; }
.slicer li { display: flex; align-items: center; gap: 8px; padding-left: 21px; min-height: 0; }
.slicer li.root { padding-left: 0; }
.slicer li.last { align-items: flex-start; }
.slicer label { display: flex; align-items: center; gap: 7px; }
.slicer input { appearance: none; width: 15px; height: 15px; margin: 0; border: 1px solid #d5cfd0; }
.box { position: relative; width: 12px; height: 12px; border: 1px solid #d5cfd0; color: #e6dcdc; flex-shrink: 0; }
.box::before, .box.plus::after { inset: 4px 2px auto; height: 1px; }
.slicer-thumb { width: 8px; height: 144px; background: #c58b8f; }

.map-frame { position: relative; flex: 1; min-height: 0; border: 5px solid #893795; }
.map-frame > svg { width: 100%; height: 100%; }
.place text { font-size: 10px; font-weight: 700; fill: #252423; paint-order: stroke; stroke: #fff; stroke-width: 2px; }
.place .big { font-size: 14px; }
.place .india { fill: #1d5fae; stroke: none; }
.place .sea { font-size: 11px; fill: #5a78b8; stroke: none; font-weight: 400; }
.bing { position: absolute; left: 5px; bottom: 9px; display: flex; gap: 3px; align-items: center; font-size: 8px; font-weight: 600; line-height: 10px; color: #80868f; }
.credit { position: absolute; right: 25px; bottom: 7px; display: flex; gap: 7px; font: 9px/9px "Liberation Sans", sans-serif; color: #000; text-align: right; }
.credit p { width: 214px; text-shadow: 0 0 2px #fff; }
.credit a { color: #2450a8; }

/* Side panes */
.pane { width: 41px; flex-shrink: 0; display: flex; flex-direction: column; align-items: center; gap: 18px; padding-top: 16px; border-left: 1px solid #dddbd9; }
.pane span { writing-mode: vertical-rl; font-size: 18px; font-weight: 600; }
.filters { background: #fff; padding-top: 14px; gap: 10px; }
.filters .icon-btn { margin-bottom: 11px; }

/* Page strip */
.pages { display: flex; align-items: flex-start; height: 44px; flex-shrink: 0; padding-left: 5px; }
.nav-arrow { width: 6px; border: 6px solid transparent; margin: 15px 7px 0 2px; }
.prev { border-right-color: #c8c6c4; border-left: 0; margin-right: 20px; }
.next { border-left-color: #c8c6c4; border-right: 0; margin-right: 9px; }
.page-tab { width: 95px; height: 44px; background: #fff; border: solid #c8c6c4; border-width: 0 1px; box-shadow: inset 0 -5px #f2c811; padding-bottom: 3px; }
.add-page { width: 49px; height: 40px; margin-top: 2px; background: #f2c811; display: grid; place-items: center; }

.status { display: flex; justify-content: space-between; align-items: center; height: 29px; flex-shrink: 0; padding: 0 7px; color: #484644; }
.status a { color: inherit; text-decoration: none; }

/* Taskbar */
.taskbar { display: grid; grid-template-columns: 1fr auto 1fr; align-items: center; height: 60px; flex-shrink: 0; border-top: 1px solid #d5d3dc; background: linear-gradient(90deg, #efedf0 0, #f1ebee 12%, #f1ebee 15%, #e6ebf7 17%, #e3e9f5 27%, #eeeee2 30%, #eeeee2 33%, #d9dbe9 36%, #e3dce9 50%, #efe3e8 60%, #f5e2df 64%, #dcdfee 69%, #dadded 86%, #f1dfe8 90%, #f4e3e9 100%); }
.task-left { padding-left: 21px; }
.task { display: grid; place-items: center; position: relative; }
.task-center { display: flex; }
.task-center .task { width: 55px; height: 58px; }
.run::after { content: ""; position: absolute; left: 50%; bottom: 4px; width: 7px; height: 4px; margin-left: -4px; border-radius: 2px; background: #7e7d84; }
.tray { display: flex; align-items: center; justify-content: flex-end; gap: 10px; padding-right: 24px; line-height: 20px; }
.lang { text-align: center; margin: 0 14px 0 9px; }
.clock { text-align: right; margin-left: 8px; font-size: 15px; }
.badge { width: 20px; height: 20px; margin-left: 4px; border-radius: 50%; background: #1f8490; color: #fff; font-size: 12px; text-align: center; }
```
